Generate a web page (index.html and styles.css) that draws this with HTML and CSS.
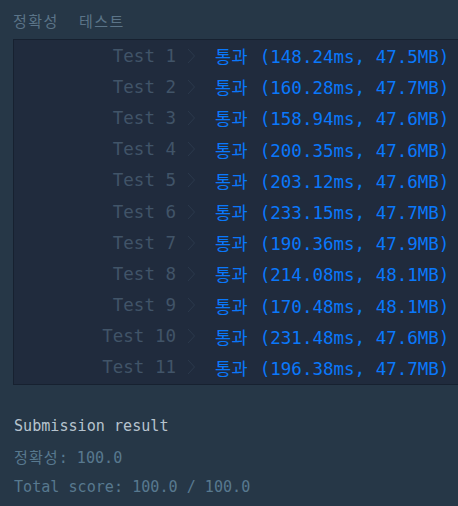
FILE: index.html
```html
<!DOCTYPE html>
<html lang="ko">
<head>
<meta charset="utf-8">
<link rel="stylesheet" href="styles.css">
</head>
<body>
<div class="tabs">
  <span class="tab">정확성</span>
  <span class="tab">테스트</span>
</div>
<div class="console">
  <div class="row"><span class="label">Test 1</span><span class="chev"><svg width="9" height="16" viewBox="0 0 9 16"><path d="M1 1 L7.5 8 L1 15" fill="none" stroke="currentColor" stroke-width="1"/></svg></span><span class="result"><span class="ko">통과</span> (148.24ms, 47.5MB)</span></div>
  <div class="row"><span class="label">Test 2</span><span class="chev"><svg width="9" height="16" viewBox="0 0 9 16"><path d="M1 1 L7.5 8 L1 15" fill="none" stroke="currentColor" stroke-width="1"/></svg></span><span class="result"><span class="ko">통과</span> (160.28ms, 47.7MB)</span></div>
  <div class="row"><span class="label">Test 3</span><span class="chev"><svg width="9" height="16" viewBox="0 0 9 16"><path d="M1 1 L7.5 8 L1 15" fill="none" stroke="currentColor" stroke-width="1"/></svg></span><span class="result"><span class="ko">통과</span> (158.94ms, 47.6MB)</span></div>
  <div class="row"><span class="label">Test 4</span><span class="chev"><svg width="9" height="16" viewBox="0 0 9 16"><path d="M1 1 L7.5 8 L1 15" fill="none" stroke="currentColor" stroke-width="1"/></svg></span><span class="result"><span class="ko">통과</span> (200.35ms, 47.6MB)</span></div>
  <div class="row"><span class="label">Test 5</span><span class="chev"><svg width="9" height="16" viewBox="0 0 9 16"><path d="M1 1 L7.5 8 L1 15" fill="none" stroke="currentColor" stroke-width="1"/></svg></span><span class="result"><span class="ko">통과</span> (203.12ms, 47.6MB)</span></div>
  <div class="row"><span class="label">Test 6</span><span class="chev"><svg width="9" height="16" viewBox="0 0 9 16"><path d="M1 1 L7.5 8 L1 15" fill="none" stroke="currentColor" stroke-width="1"/></svg></span><span class="result"><span class="ko">통과</span> (233.15ms, 47.7MB)</span></div>
  <div class="row"><span class="label">Test 7</span><span class="chev"><svg width="9" height="16" viewBox="0 0 9 16"><path d="M1 1 L7.5 8 L1 15" fill="none" stroke="currentColor" stroke-width="1"/></svg></span><span class="result"><span class="ko">통과</span> (190.36ms, 47.9MB)</span></div>
  <div class="row"><span class="label">Test 8</span><span class="chev"><svg width="9" height="16" viewBox="0 0 9 16"><path d="M1 1 L7.5 8 L1 15" fill="none" stroke="currentColor" stroke-width="1"/></svg></span><span class="result"><span class="ko">통과</span> (214.08ms, 48.1MB)</span></div>
  <div class="row"><span class="label">Test 9</span><span class="chev"><svg width="9" height="16" viewBox="0 0 9 16"><path d="M1 1 L7.5 8 L1 15" fill="none" stroke="currentColor" stroke-width="1"/></svg></span><span class="result"><span class="ko">통과</span> (170.48ms, 48.1MB)</span></div>
  <div class="row"><span class="label">Test 10</span><span class="chev"><svg width="9" height="16" viewBox="0 0 9 16"><path d="M1 1 L7.5 8 L1 15" fill="none" stroke="currentColor" stroke-width="1"/></svg></span><span class="result"><span class="ko">통과</span> (231.48ms, 47.6MB)</span></div>
  <div class="row"><span class="label">Test 11</span><span class="chev"><svg width="9" height="16" viewBox="0 0 9 16"><path d="M1 1 L7.5 8 L1 15" fill="none" stroke="currentColor" stroke-width="1"/></svg></span><span class="result"><span class="ko">통과</span> (196.38ms, 47.7MB)</span></div>
</div>
<div class="summary">
  <div class="title">Submission result</div>
  <div class="line first"><span class="ko-s">정확성</span>: 100.0</div>
  <div class="line">Total score: 100.0 / 100.0</div>
</div>
</body>
</html>
```
FILE: styles.css
```css
html, body {
  margin: 0;
  padding: 0;
}
body {
  background: #263747;
  font-family: "DejaVu Sans Mono", "Noto Sans CJK KR", monospace;
  width: 458px;
  height: 506px;
  overflow: hidden;
}
.tabs {
  height: 39px;
  display: flex;
  align-items: center;
  gap: 20px;
  padding-left: 13px;
  padding-top: 2px;
  box-sizing: border-box;
}
.tab {
  font-family: "Noto Sans CJK KR", sans-serif;
  font-size: 15px;
  letter-spacing: 1.5px;
  color: #5b7488;
  line-height: 1;
}
.console {
  margin-left: 13px;
  background: #202b3d;
  border: 1px solid #172130;
  border-right: none;
  padding: 0 0 2px;
  height: 346px;
  box-sizing: border-box;
}
.row {
  display: flex;
  align-items: center;
  height: 31.2px;
  font-size: 17.5px;
  white-space: nowrap;
}
.label {
  width: 162px;
  text-align: right;
  color: #415468;
}
.chev {
  width: 39px;
  display: flex;
  align-items: center;
  padding-left: 11px;
  box-sizing: border-box;
  color: #2b394c;
}
.chev svg {
  display: block;
}
.result {
  color: #0a78fb;
}
.ko {
  letter-spacing: 0.5px;
  margin-right: 1px;
}
.summary {
  padding: 30px 14px 0;
  font-size: 15.1px;
}
.title {
  color: #b6c3ce;
  line-height: 22px;
}
.line {
  color: #58798f;
  line-height: 29px;
}
.line.first {
  margin-top: 7px;
}
.ko-s {
  letter-spacing: 1px;
}
```
